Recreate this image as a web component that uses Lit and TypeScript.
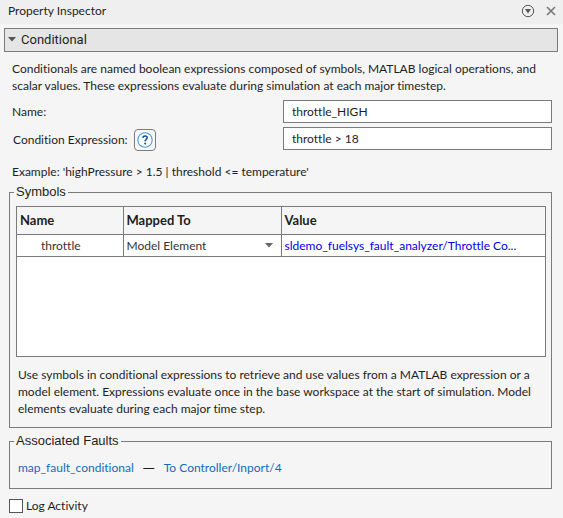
import { LitElement, html, css } from "lit";
import { customElement, state } from "lit/decorators.js";

interface SymbolRow {
  name: string;
  mappedTo: string;
  value: string;
}

@customElement("app-root")
export class AppRoot extends LitElement {
  @state() private open = true;

  private symbols: SymbolRow[] = [
    {
      name: "throttle",
      mappedTo: "Model Element",
      value: "sldemo_fuelsys_fault_analyzer/Throttle Co...",
    },
  ];

  static styles = css`
    :host {
      display: block;
      min-height: 100vh;
      background: #f5f5f5;
      color: #1e1e1e;
      font: 12px/17px Lato, "Open Sans", sans-serif;
      font-variant-ligatures: none;
    }
    * {
      box-sizing: border-box;
    }
    button,
    input,
    select {
      font: inherit;
      color: inherit;
      margin: 0;
      padding: 0;
    }
    p {
      margin: 0;
    }
    a {
      text-decoration: none;
    }
    svg {
      display: block;
    }
    .titlebar {
      display: flex;
      align-items: center;
      gap: 9px;
      height: 24px;
      padding: 0 5px 3px 8px;
      background: #efefef;
    }
    .titlebar h1 {
      flex: 1;
      margin: 0;
      font: inherit;
    }
    .icon-button {
      border: 0;
      background: none;
    }
    .section {
      padding: 4px 5px 0 4px;
    }
    .section-title {
      margin: 0;
      font: inherit;
    }
    .section-toggle {
      display: flex;
      align-items: center;
      gap: 5px;
      width: 100%;
      height: 24px;
      padding: 0 3px 1px;
      border: 1px solid #7b7b7b;
      background: #e5e5e5;
      font: 13px/16px Roboto, "Liberation Sans", sans-serif;
    }
    .content {
      padding: 8px 6px 5px 5px;
    }
    .indent {
      padding-left: 3px;
    }
    .fields {
      display: grid;
      grid-template-columns: 274px 1fr;
      row-gap: 4px;
      margin-top: 6px;
    }
    .label {
      display: flex;
      align-items: center;
      gap: 6px;
      padding-left: 3px;
    }
    .label-help {
      padding-left: 4px;
      height: 25px;
    }
    .help {
      display: grid;
      place-items: center;
      width: 22px;
      height: 22px;
      border: 1px solid #7b7b7b;
      border-radius: 4px;
      background: #f8f8f8;
    }
    .text {
      width: 100%;
      height: 23px;
      padding: 0 8px;
      border: 1px solid #7b7b7b;
      border-radius: 0;
      background: #fff;
    }
    .example {
      margin-top: 11px;
    }
    fieldset {
      min-width: 0;
      margin: 0;
      padding: 0 4px;
      border: 1px solid #7b7b7b;
    }
    legend {
      padding: 0 2px;
      font: 13px/16px "Liberation Sans", sans-serif;
    }
    .symbols {
      margin-top: 4px;
    }
    .grid {
      margin: 6px 1px 0 2px;
      height: 151px;
      border: 1px solid #7b7b7b;
      background: #fff;
    }
    table {
      width: 100%;
      border-collapse: collapse;
      table-layout: fixed;
    }
    th,
    td {
      padding: 0 3px;
      border: 0 solid #7b7b7b;
      border-bottom-width: 1px;
      text-align: left;
      white-space: nowrap;
    }
    th {
      height: 27px;
      background: #f5f5f5;
      font-size: 13px;
      font-weight: 700;
    }
    td {
      height: 22px;
      color: #333;
    }
    th + th,
    td + td {
      border-left-width: 1px;
    }
    .name-column {
      width: 106px;
    }
    .mapped-column {
      width: 158px;
    }
    .symbol-name {
      padding-left: 24px;
    }
    .select {
      display: flex;
      align-items: center;
      padding-right: 5px;
    }
    .select select {
      flex: 1;
      min-width: 0;
      height: 20px;
      border: 0;
      background: none;
      appearance: none;
    }
    .value {
      color: #0000ee;
    }
    .note {
      padding: 9px 4px 10px;
    }
    .faults {
      margin-top: 5px;
    }
    .fault {
      display: flex;
      gap: 9px;
      padding: 10px 4px 12px;
    }
    .dash {
      font-family: "Open Sans", sans-serif;
    }
    .fault a {
      color: #0f6cbd;
    }
    .log {
      display: flex;
      align-items: center;
      gap: 3px;
      margin-top: 8px;
    }
    .log input {
      width: 14px;
      height: 14px;
      border: 1px solid #555;
      background: #fff;
      appearance: none;
    }
    .log input:checked {
      background: #0f6cbd;
    }
  `;

  private renderRow(row: SymbolRow) {
    return html`
      <tr>
        <td class="symbol-name">${row.name}</td>
        <td>
          <div class="select">
            <select aria-label="Mapped to">
              <option>${row.mappedTo}</option>
              <option>MATLAB Expression</option>
            </select>
            <svg width="8" height="5" viewBox="0 0 8 5" aria-hidden="true">
              <path d="M0 0h8L4 4.5z" fill="#666" />
            </svg>
          </div>
        </td>
        <td><a class="value" href="#value">${row.value}</a></td>
      </tr>
    `;
  }

  private renderContent() {
    return html`
      <div class="content">
        <p class="indent">
          Conditionals are named boolean expressions composed of symbols, MATLAB
          logical operations, and scalar values. These expressions evaluate
          during simulation at each major timestep.
        </p>
        <div class="fields">
          <div class="label"><label for="name">Name:</label></div>
          <input class="text" id="name" type="text" value="throttle_HIGH" />
          <div class="label label-help">
            <label for="condition">Condition Expression:</label>
            <button class="help" type="button" aria-label="Help">
              <svg width="16" height="16" viewBox="0 0 16 16">
                <circle cx="8" cy="8" r="7.2" fill="#fff" stroke="#4a98dc" stroke-width="1.1" />
                <path
                  d="M5.9 5.9C6 4.6 6.9 4 8.1 4c1.3 0 2.1.7 2.1 1.8 0 1.6-2.1 1.5-2.1 3.5"
                  fill="none"
                  stroke="#14509c"
                  stroke-width="1.6"
                />
                <circle cx="8.1" cy="11.5" r="1" fill="#14509c" />
              </svg>
            </button>
          </div>
          <input class="text" id="condition" type="text" value="throttle > 18" />
        </div>
        <p class="indent example">
          Example: 'highPressure &gt; 1.5 | threshold &lt;= temperature'
        </p>
        <fieldset class="symbols">
          <legend>Symbols</legend>
          <div class="grid">
            <table>
              <thead>
                <tr>
                  <th class="name-column" scope="col">Name</th>
                  <th class="mapped-column" scope="col">Mapped To</th>
                  <th scope="col">Value</th>
                </tr>
              </thead>
              <tbody>
                ${this.symbols.map((row) => this.renderRow(row))}
              </tbody>
            </table>
          </div>
          <p class="note">
            Use symbols in conditional expressions to retrieve and use values
            from a MATLAB expression or a model element. Expressions evaluate
            once in the base workspace at the start of simulation. Model
            elements evaluate during each major time step.
          </p>
        </fieldset>
        <fieldset class="faults">
          <legend>Associated Faults</legend>
          <div class="fault">
            <a href="#fault">map_fault_conditional</a>
            <span class="dash">—</span>
            <a href="#port">To Controller/Inport/4</a>
          </div>
        </fieldset>
        <label class="log"><input type="checkbox" />Log Activity</label>
      </div>
    `;
  }

  render() {
    return html`
      <header class="titlebar">
        <h1>Property Inspector</h1>
        <button class="icon-button" type="button" aria-label="Panel actions">
          <svg width="14" height="14" viewBox="0 0 14 14">
            <circle cx="7" cy="7" r="5.7" fill="none" stroke="#555" />
            <path d="M4 5h6L7 9.500z" fill="#555" />
          </svg>
        </button>
        <button class="icon-button" type="button" aria-label="Close">
          <svg width="14" height="14" viewBox="0 0 14 14">
            <path d="M3 3l8 8M11 3l-8 8" stroke="#777" stroke-width="1.6" />
          </svg>
        </button>
      </header>
      <main class="section">
        <h2 class="section-title">
          <button
            class="section-toggle"
            type="button"
            aria-expanded=${this.open}
            @click=${() => (this.open = !this.open)}
          >
            <svg width="8" height="5" viewBox="0 0 8 5" aria-hidden="true">
              <path d="M0 0h8L4 4.5z" fill="#555" />
            </svg>
            Conditional
          </button>
        </h2>
        ${this.open ? this.renderContent() : null}
      </main>
    `;
  }
}
